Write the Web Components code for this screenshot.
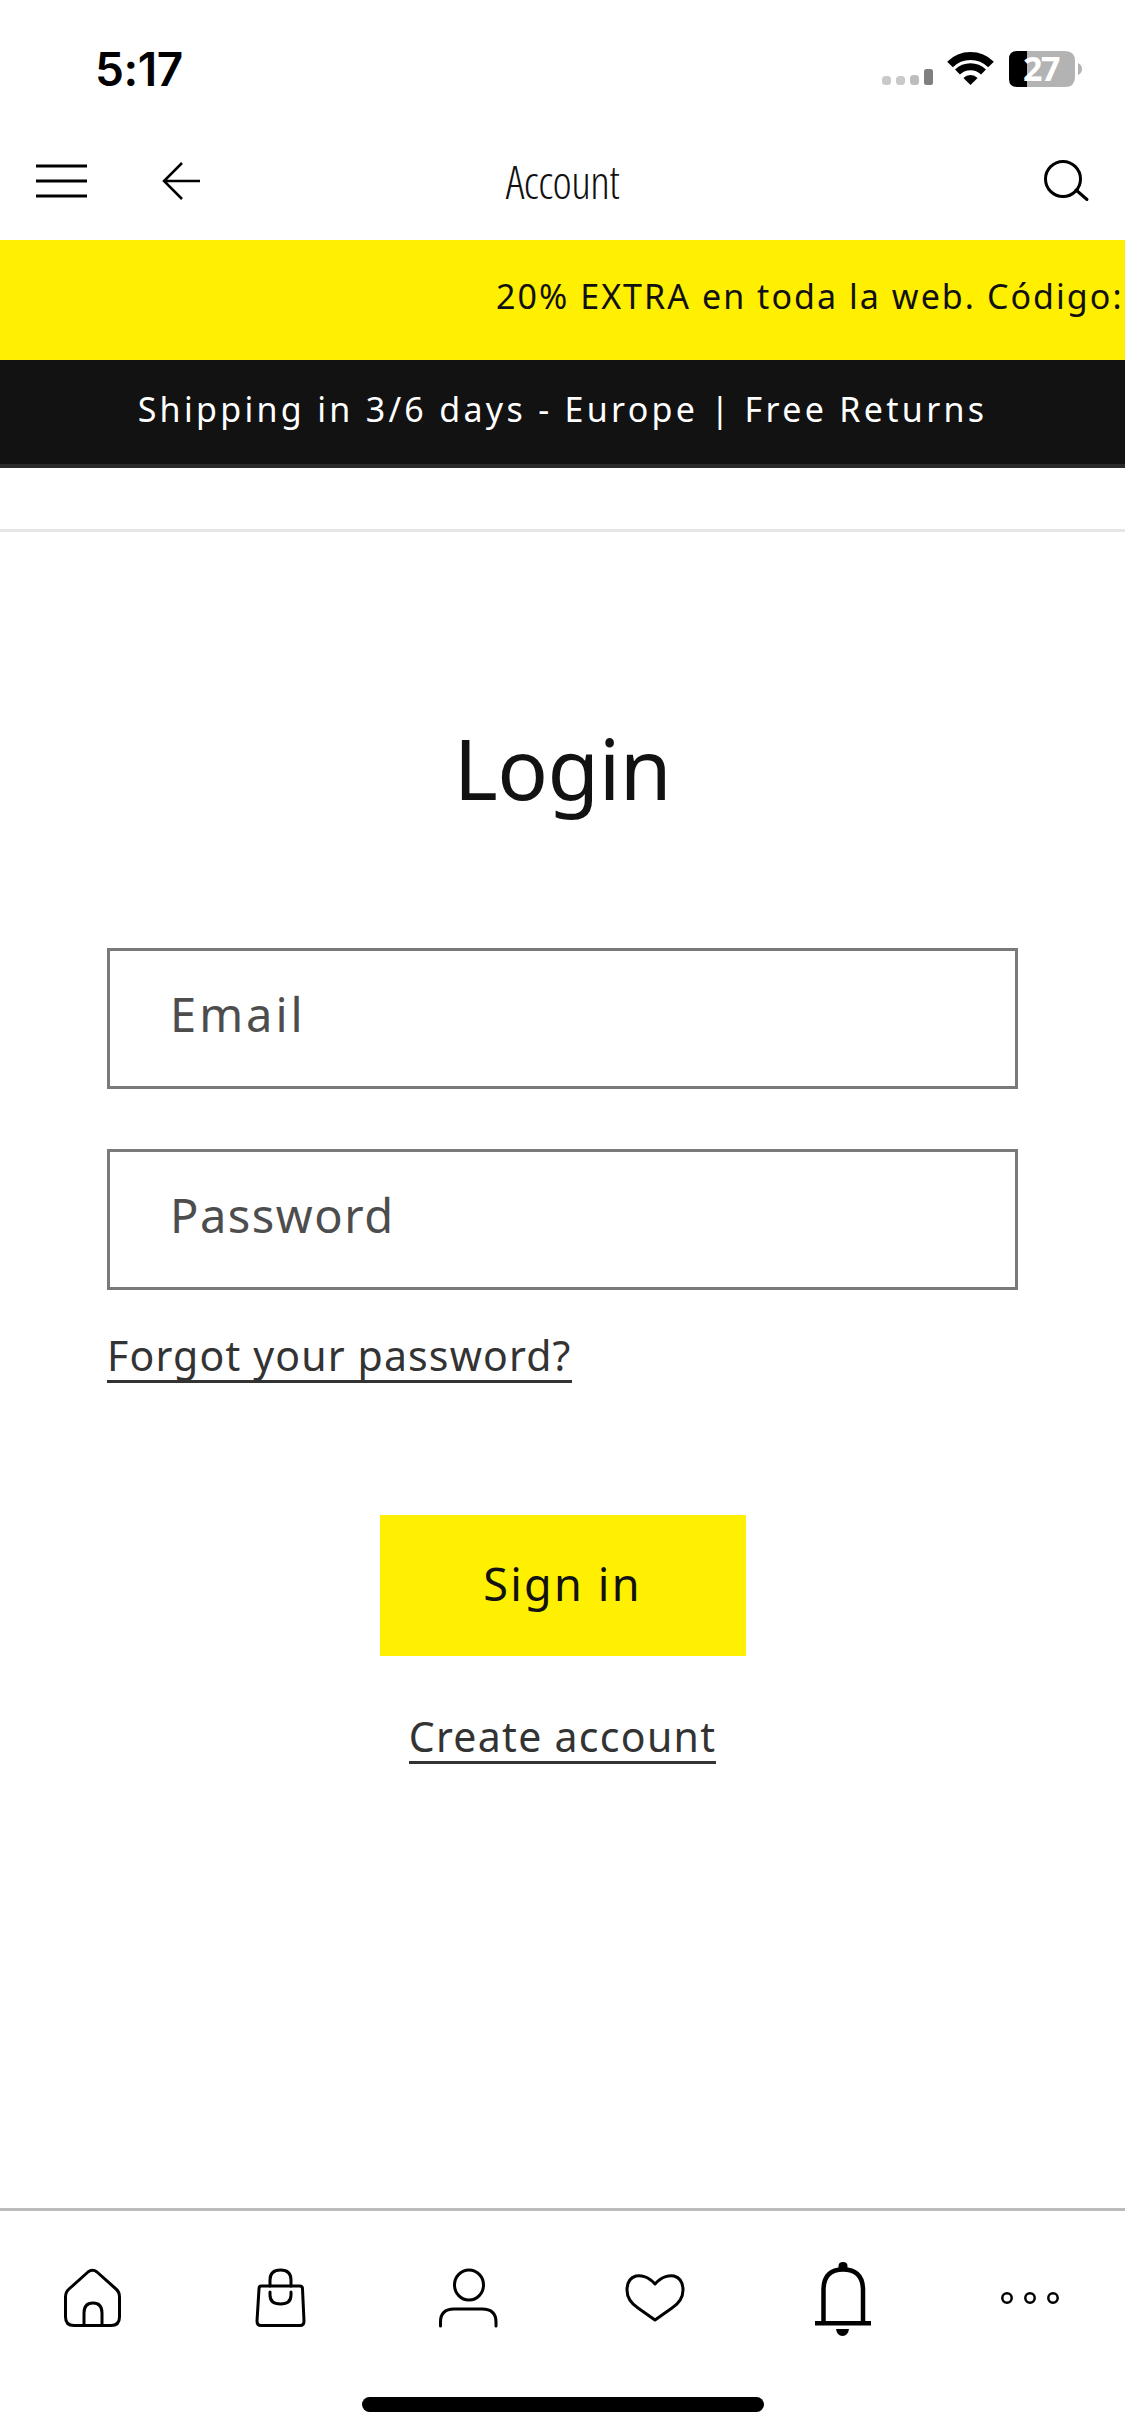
<!DOCTYPE html>
<html lang="en"><head><meta charset="utf-8"><title>Account</title>
<style>
html,body{margin:0;padding:0;background:#fff}
body{width:1125px;height:2436px;overflow:hidden;font-family:"Noto Sans","Open Sans",sans-serif}
app-shell{display:flex;flex-direction:column;height:2436px}
</style></head><body>
<app-shell>
<status-bar></status-bar>
<top-nav></top-nav>
<promo-bar></promo-bar>
<ship-bar></ship-bar>
<login-form></login-form>
<tab-bar></tab-bar>
</app-shell>
<script>
function def(name,html){customElements.define(name,class extends HTMLElement{constructor(){super();this.attachShadow({mode:'open'}).innerHTML=html;}});}
def('status-bar',`<style>
:host{display:flex;height:134px;box-sizing:border-box;padding:0 0 0 95px;position:relative;flex:none}
.t{font:600 46px/1 Inter,"Liberation Sans",sans-serif;color:#000;margin-top:46px;letter-spacing:-.4px}
svg{position:absolute;left:870px;top:40px}
.n{font:700 34px "Open Sans",sans-serif;fill:#fff;letter-spacing:-1.500px}
</style><div class="t">5:17</div>
<svg width="220" height="60" viewBox="870 40 220 60">
<g fill="#c9c9c9"><rect x="882" y="76" width="9" height="9" rx="3.500"/><rect x="896" y="76" width="9" height="9" rx="3.500"/><rect x="910" y="75" width="9" height="10" rx="3.500" fill="#bdbdbd"/></g>
<rect x="924" y="69" width="9" height="16" rx="2.500" fill="#7f7f7f"/>
<g fill="none" stroke="#000">
<path d="M950 64.500A29 29 0 0 1 991 64.500" stroke-width="8"/>
<path d="M957.500 72A18.500 18.500 0 0 1 983.500 72" stroke-width="7"/>
</g>
<path d="M963.400 78A10 10 0 0 1 977.600 78L970.500 85Z" fill="#000"/>
<path d="M1027 51H1065Q1075 51 1075 61V77Q1075 87 1065 87H1027Z" fill="#b3b3b3"/>
<path d="M1027 51V87H1017Q1009 87 1009 79V59Q1009 51 1017 51Z" fill="#000"/>
<path d="M1078 63Q1082 65 1082 69Q1082 73 1078 75Z" fill="#b3b3b3"/>
<text x="1023" y="81" class="n">27</text>
</svg>`);
def('top-nav',`<style>
:host{display:block;height:106px;position:relative;flex:none}
.ti{text-align:center;font:300 46px/94px "Open Sans",sans-serif;font-stretch:75%;letter-spacing:-.6px;color:#111}
svg{position:absolute;top:0;left:0}
</style><div class="ti">Account</div>
<svg width="1125" height="106" viewBox="0 134 1125 106" fill="none" stroke="#000">
<path d="M36 166H87M36 181H87M36 196H87" stroke-width="3"/>
<path d="M182 163L164 181L182 199M164 181H200" stroke-width="2.500"/>
<circle cx="1063" cy="179" r="17.500" stroke-width="3"/><path d="M1076 190L1087 199.500" stroke-width="3" stroke-linecap="round"/>
</svg>`);
def('promo-bar',`<style>
:host{display:block;height:120px;background:#ffef00;flex:none;overflow:hidden;white-space:nowrap;color:#111;font:400 34px/112px "Noto Sans",sans-serif;letter-spacing:2.050px;padding-left:496px;box-sizing:border-box}
</style>20% EXTRA en toda la web. Código: EXTRA20`);
def('ship-bar',`<style>
:host{display:block;height:108px;background:#121212;border-bottom:4px solid #2a2a2a;flex:none;text-align:center;color:#fff;font:400 34px/98px "Noto Sans",sans-serif;letter-spacing:3.300px;box-sizing:border-box}
</style>Shipping in 3/6 days - Europe | Free Returns`);
def('login-form',`<style>
:host{display:flex;flex-direction:column;flex:1;min-height:0;margin-top:61px;border-top:3px solid #e6e6e6;padding:0 107px;color:#121212;box-sizing:border-box}
h1{margin:186px 0 0;font:400 84px/100px "Noto Sans",sans-serif;text-align:center;letter-spacing:-.5px}
.f{height:141px;box-sizing:border-box;border:3px solid #7a7a7a;padding:0 0 0 60px;font:400 47px/126px "Noto Sans",sans-serif;color:#4d4d4d;flex:none}
.first{margin-top:130px;letter-spacing:3px}.second{margin-top:60px;letter-spacing:1.500px}
a{color:#333;text-decoration:none;border-bottom:3px solid #333;padding-bottom:2px;font:400 41px/46px "Noto Sans",sans-serif;align-self:flex-start;display:block}
.fp{margin-top:42px;letter-spacing:1.150px}
.b{align-self:center;margin-top:132px;width:366px;height:141px;padding-bottom:4px;box-sizing:border-box;background:#ffef00;color:#121212;display:flex;align-items:center;justify-content:center;font:400 45px/1 "Noto Sans",sans-serif;letter-spacing:2.200px;flex:none}
.ca{align-self:center;margin-top:57px;letter-spacing:1.300px}
</style><h1>Login</h1>
<div class="f first">Email</div><div class="f second">Password</div>
<a class="fp">Forgot your password?</a>
<div class="b">Sign in</div><a class="ca">Create account</a>`);
def('tab-bar',`<style>
:host{display:block;height:228px;flex:none;border-top:3px solid #bbb;box-sizing:border-box}
svg{display:block}
</style><svg width="1125" height="225" viewBox="0 2211 1125 225" fill="none" stroke="#000" stroke-width="3" stroke-linejoin="round" stroke-linecap="round">
<path d="M88 2272L69 2289Q65.500 2292 65.500 2297V2317Q65.500 2325.500 74 2325.500H111Q119.500 2325.500 119.500 2317V2297Q119.500 2292 116 2289L97 2272Q92.500 2268.500 88 2272Z"/>
<path d="M84 2325V2313Q84 2303 93 2303Q102 2303 102 2313V2325"/>
<path d="M261 2286H300Q302.500 2286 302.500 2289L304 2321Q304 2325.500 300 2325.500H261Q257 2325.500 257 2321L259 2289Q259 2286 261 2286Z"/>
<path d="M270 2286V2280Q270 2270 280.500 2270Q291 2270 291 2280V2286M270 2292V2295Q270 2304 280.500 2304Q291 2304 291 2295V2292"/>
<ellipse cx="469" cy="2285" rx="14.500" ry="15"/>
<path d="M440.500 2326V2322Q440.500 2309 454 2309H482Q496 2309 496 2322V2326"/>
<path d="M655 2284C648 2276 640 2275 636 2276C629 2278 627 2284 627 2290C627 2298 632 2304 638 2308L655 2320L672 2308C678 2304 683 2298 683 2290C683 2284 681 2278 674 2276C670 2275 662 2276 655 2284Z"/>
<path d="M823.500 2323V2290Q823.500 2269.500 843 2269.500Q863 2269.500 863 2290V2323" stroke-width="4.500" stroke-linecap="butt"/>
<path d="M838.500 2270V2266Q838.500 2262 843 2262Q847.500 2262 847.500 2266V2270Z" fill="#000" stroke="none"/>
<rect x="815" y="2321" width="56" height="4.500" fill="#000" stroke="none"/>
<path d="M836 2329H849Q848 2336 842.500 2336Q837 2336 836 2329Z" fill="#000" stroke="none"/>
<g stroke-width="2.500"><circle cx="1007" cy="2298" r="4.700"/><circle cx="1030" cy="2298" r="4.700"/><circle cx="1053" cy="2298" r="4.700"/></g>
<rect x="362" y="2397" width="402" height="15" rx="7.500" fill="#000" stroke="none"/>
</svg>`);
</script></body></html>
